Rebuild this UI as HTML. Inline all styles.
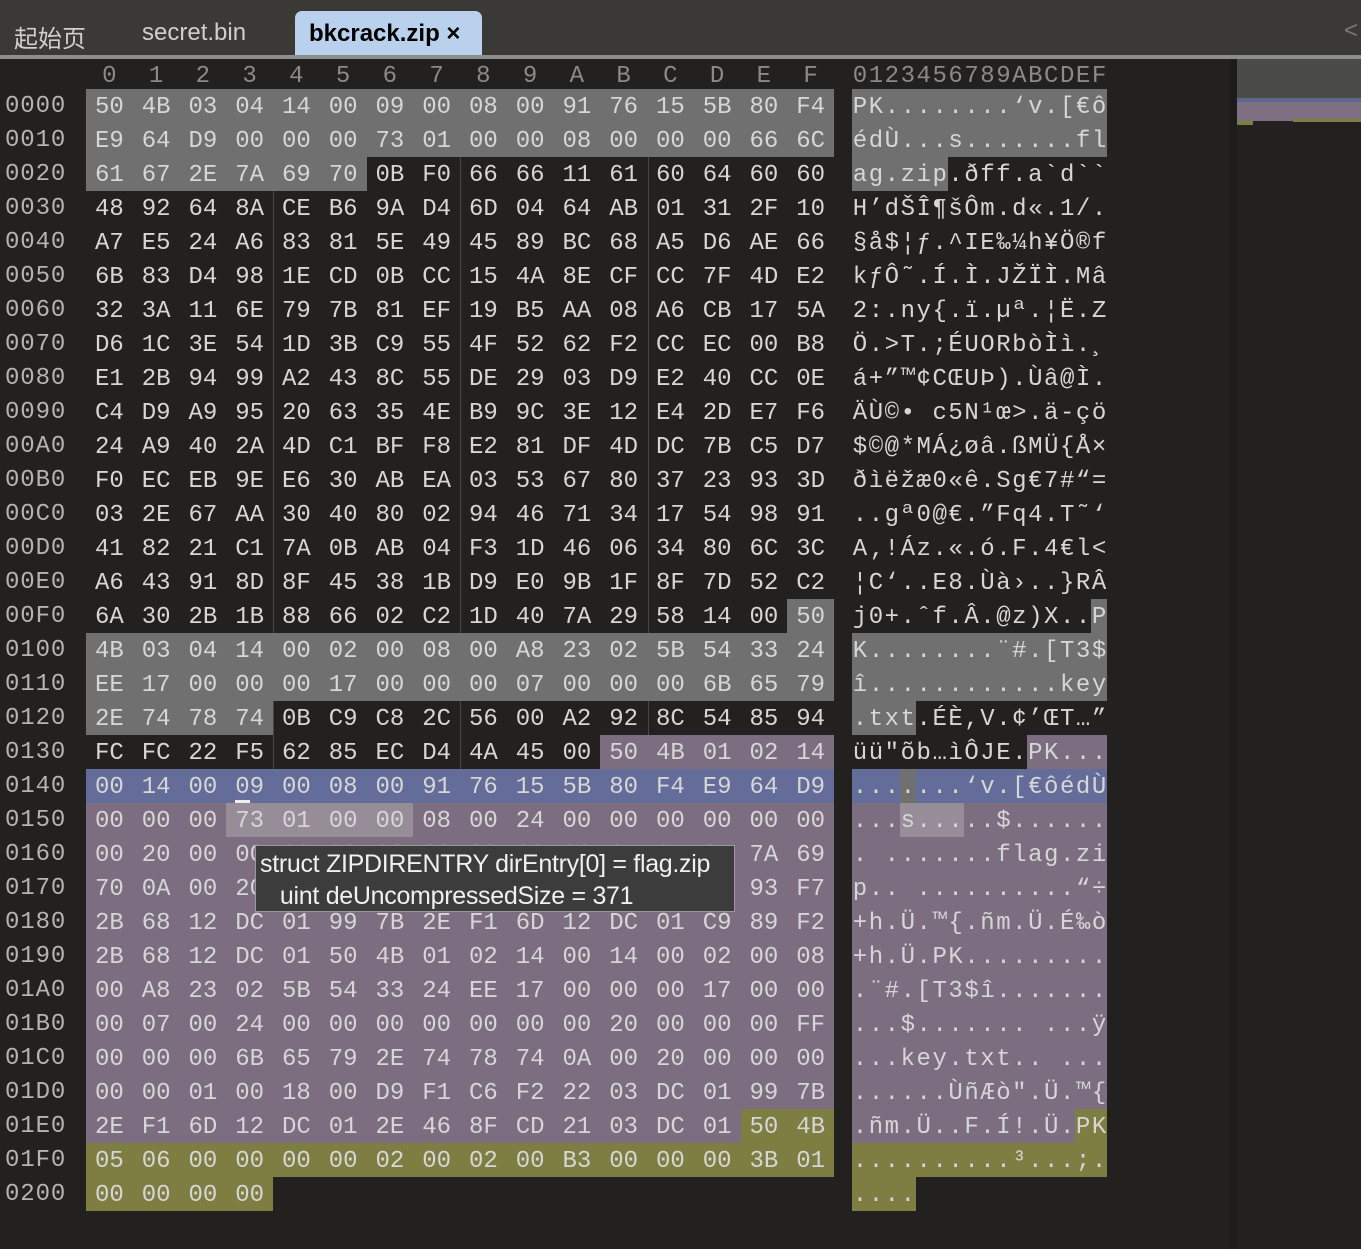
<!DOCTYPE html>
<html><head><meta charset="utf-8"><style>
*{margin:0;padding:0;box-sizing:border-box}
body{width:1361px;height:1249px;background:#222120;position:relative;overflow:hidden;font-family:"Liberation Mono","DejaVu Sans Mono",monospace;color:#d6d6d6}
.tabbar{position:absolute;left:0;top:0;width:1361px;height:55px;background:#3b3935}
.line{position:absolute;left:0;top:55px;width:1361px;height:4px;background:#8e8e8e}
.tab{position:absolute;top:19px;font:24px "Liberation Sans","Noto Sans CJK SC",sans-serif;color:#cfcfcf}
.act{position:absolute;left:295px;top:11px;width:187px;height:46px;background:#b9d1ec;border-radius:7px 7px 0 0;font:bold 24px "Liberation Sans",sans-serif;color:#000;padding:9px 0 0 14px}
.r{position:absolute;left:0;height:34px;width:1237px}
.o{position:absolute;left:5px;top:0;line-height:36px;font-size:24px;letter-spacing:0.9px;color:#b4b4b4}
.h{position:absolute;left:86px;top:0;white-space:pre}
.a{position:absolute;left:852px;top:0;white-space:pre}
.h i{display:inline-block;width:46.75px;height:34px;line-height:37px;text-align:center;font-style:normal;font-size:24px;vertical-align:top;overflow:hidden}
.a i{display:inline-block;width:15.94px;height:34px;line-height:37px;text-align:center;font-style:normal;font-size:24px;vertical-align:top;overflow:hidden}
.g{background:#707070}.p{background:#7c6e80}.b{background:#646d99}.l{background:#978d99}.y{background:#7e7d42}
.hd{color:#8a8a8a}
.sep{position:absolute;top:89px;width:1px;height:1088px;background:#474747}
</style></head><body>
<div class="tabbar"></div>
<div class="tab" style="left:14px">起始页</div>
<div class="tab" style="left:142px">secret.bin</div>
<div class="act">bkcrack.zip ×</div>
<div style="position:absolute;left:1344px;top:17px;color:#777;font:24px 'Liberation Sans',sans-serif">&lt;</div>
<div class="line"></div>
<div style="position:absolute;left:1230px;top:59px;width:7px;height:1190px;background:#1c1c1c"></div>
<div style="position:absolute;left:1237px;top:59px;width:124px;height:39px;background:#4b4c48"></div>
<div style="position:absolute;left:1237px;top:98px;width:124px;height:4px;background:#5e6690"></div>
<div style="position:absolute;left:1237px;top:102px;width:124px;height:19px;background:#7f6f82"></div>
<div style="position:absolute;left:1237px;top:121px;width:16px;height:4px;background:#7e7d42"></div>
<div style="position:absolute;left:1293px;top:119px;width:68px;height:3px;background:#7e7d42"></div>

<div class="r" style="top:58px"><div class="h hd"><i>0</i><i>1</i><i>2</i><i>3</i><i>4</i><i>5</i><i>6</i><i>7</i><i>8</i><i>9</i><i>A</i><i>B</i><i>C</i><i>D</i><i>E</i><i>F</i></div><div class="a hd"><i>0</i><i>1</i><i>2</i><i>3</i><i>4</i><i>5</i><i>6</i><i>7</i><i>8</i><i>9</i><i>A</i><i>B</i><i>C</i><i>D</i><i>E</i><i>F</i></div></div>

<div class="sep" style="left:273px"></div><div class="sep" style="left:460px"></div><div class="sep" style="left:648px"></div>

<div class="r" style="top:89px"><span class="o">0000</span><div class="h"><i class="g">50</i><i class="g">4B</i><i class="g">03</i><i class="g">04</i><i class="g">14</i><i class="g">00</i><i class="g">09</i><i class="g">00</i><i class="g">08</i><i class="g">00</i><i class="g">91</i><i class="g">76</i><i class="g">15</i><i class="g">5B</i><i class="g">80</i><i class="g">F4</i></div><div class="a"><i class="g">P</i><i class="g">K</i><i class="g">.</i><i class="g">.</i><i class="g">.</i><i class="g">.</i><i class="g">.</i><i class="g">.</i><i class="g">.</i><i class="g">.</i><i class="g">‘</i><i class="g">v</i><i class="g">.</i><i class="g">[</i><i class="g">€</i><i class="g">ô</i></div></div>
<div class="r" style="top:123px"><span class="o">0010</span><div class="h"><i class="g">E9</i><i class="g">64</i><i class="g">D9</i><i class="g">00</i><i class="g">00</i><i class="g">00</i><i class="g">73</i><i class="g">01</i><i class="g">00</i><i class="g">00</i><i class="g">08</i><i class="g">00</i><i class="g">00</i><i class="g">00</i><i class="g">66</i><i class="g">6C</i></div><div class="a"><i class="g">é</i><i class="g">d</i><i class="g">Ù</i><i class="g">.</i><i class="g">.</i><i class="g">.</i><i class="g">s</i><i class="g">.</i><i class="g">.</i><i class="g">.</i><i class="g">.</i><i class="g">.</i><i class="g">.</i><i class="g">.</i><i class="g">f</i><i class="g">l</i></div></div>
<div class="r" style="top:157px"><span class="o">0020</span><div class="h"><i class="g">61</i><i class="g">67</i><i class="g">2E</i><i class="g">7A</i><i class="g">69</i><i class="g">70</i><i>0B</i><i>F0</i><i>66</i><i>66</i><i>11</i><i>61</i><i>60</i><i>64</i><i>60</i><i>60</i></div><div class="a"><i class="g">a</i><i class="g">g</i><i class="g">.</i><i class="g">z</i><i class="g">i</i><i class="g">p</i><i>.</i><i>ð</i><i>f</i><i>f</i><i>.</i><i>a</i><i>`</i><i>d</i><i>`</i><i>`</i></div></div>
<div class="r" style="top:191px"><span class="o">0030</span><div class="h"><i>48</i><i>92</i><i>64</i><i>8A</i><i>CE</i><i>B6</i><i>9A</i><i>D4</i><i>6D</i><i>04</i><i>64</i><i>AB</i><i>01</i><i>31</i><i>2F</i><i>10</i></div><div class="a"><i>H</i><i>’</i><i>d</i><i>Š</i><i>Î</i><i>¶</i><i>š</i><i>Ô</i><i>m</i><i>.</i><i>d</i><i>«</i><i>.</i><i>1</i><i>/</i><i>.</i></div></div>
<div class="r" style="top:225px"><span class="o">0040</span><div class="h"><i>A7</i><i>E5</i><i>24</i><i>A6</i><i>83</i><i>81</i><i>5E</i><i>49</i><i>45</i><i>89</i><i>BC</i><i>68</i><i>A5</i><i>D6</i><i>AE</i><i>66</i></div><div class="a"><i>§</i><i>å</i><i>$</i><i>¦</i><i>ƒ</i><i>.</i><i>^</i><i>I</i><i>E</i><i>‰</i><i>¼</i><i>h</i><i>¥</i><i>Ö</i><i>®</i><i>f</i></div></div>
<div class="r" style="top:259px"><span class="o">0050</span><div class="h"><i>6B</i><i>83</i><i>D4</i><i>98</i><i>1E</i><i>CD</i><i>0B</i><i>CC</i><i>15</i><i>4A</i><i>8E</i><i>CF</i><i>CC</i><i>7F</i><i>4D</i><i>E2</i></div><div class="a"><i>k</i><i>ƒ</i><i>Ô</i><i>˜</i><i>.</i><i>Í</i><i>.</i><i>Ì</i><i>.</i><i>J</i><i>Ž</i><i>Ï</i><i>Ì</i><i>.</i><i>M</i><i>â</i></div></div>
<div class="r" style="top:293px"><span class="o">0060</span><div class="h"><i>32</i><i>3A</i><i>11</i><i>6E</i><i>79</i><i>7B</i><i>81</i><i>EF</i><i>19</i><i>B5</i><i>AA</i><i>08</i><i>A6</i><i>CB</i><i>17</i><i>5A</i></div><div class="a"><i>2</i><i>:</i><i>.</i><i>n</i><i>y</i><i>{</i><i>.</i><i>ï</i><i>.</i><i>µ</i><i>ª</i><i>.</i><i>¦</i><i>Ë</i><i>.</i><i>Z</i></div></div>
<div class="r" style="top:327px"><span class="o">0070</span><div class="h"><i>D6</i><i>1C</i><i>3E</i><i>54</i><i>1D</i><i>3B</i><i>C9</i><i>55</i><i>4F</i><i>52</i><i>62</i><i>F2</i><i>CC</i><i>EC</i><i>00</i><i>B8</i></div><div class="a"><i>Ö</i><i>.</i><i>&gt;</i><i>T</i><i>.</i><i>;</i><i>É</i><i>U</i><i>O</i><i>R</i><i>b</i><i>ò</i><i>Ì</i><i>ì</i><i>.</i><i>¸</i></div></div>
<div class="r" style="top:361px"><span class="o">0080</span><div class="h"><i>E1</i><i>2B</i><i>94</i><i>99</i><i>A2</i><i>43</i><i>8C</i><i>55</i><i>DE</i><i>29</i><i>03</i><i>D9</i><i>E2</i><i>40</i><i>CC</i><i>0E</i></div><div class="a"><i>á</i><i>+</i><i>”</i><i>™</i><i>¢</i><i>C</i><i>Œ</i><i>U</i><i>Þ</i><i>)</i><i>.</i><i>Ù</i><i>â</i><i>@</i><i>Ì</i><i>.</i></div></div>
<div class="r" style="top:395px"><span class="o">0090</span><div class="h"><i>C4</i><i>D9</i><i>A9</i><i>95</i><i>20</i><i>63</i><i>35</i><i>4E</i><i>B9</i><i>9C</i><i>3E</i><i>12</i><i>E4</i><i>2D</i><i>E7</i><i>F6</i></div><div class="a"><i>Ä</i><i>Ù</i><i>©</i><i>•</i><i> </i><i>c</i><i>5</i><i>N</i><i>¹</i><i>œ</i><i>&gt;</i><i>.</i><i>ä</i><i>-</i><i>ç</i><i>ö</i></div></div>
<div class="r" style="top:429px"><span class="o">00A0</span><div class="h"><i>24</i><i>A9</i><i>40</i><i>2A</i><i>4D</i><i>C1</i><i>BF</i><i>F8</i><i>E2</i><i>81</i><i>DF</i><i>4D</i><i>DC</i><i>7B</i><i>C5</i><i>D7</i></div><div class="a"><i>$</i><i>©</i><i>@</i><i>*</i><i>M</i><i>Á</i><i>¿</i><i>ø</i><i>â</i><i>.</i><i>ß</i><i>M</i><i>Ü</i><i>{</i><i>Å</i><i>×</i></div></div>
<div class="r" style="top:463px"><span class="o">00B0</span><div class="h"><i>F0</i><i>EC</i><i>EB</i><i>9E</i><i>E6</i><i>30</i><i>AB</i><i>EA</i><i>03</i><i>53</i><i>67</i><i>80</i><i>37</i><i>23</i><i>93</i><i>3D</i></div><div class="a"><i>ð</i><i>ì</i><i>ë</i><i>ž</i><i>æ</i><i>0</i><i>«</i><i>ê</i><i>.</i><i>S</i><i>g</i><i>€</i><i>7</i><i>#</i><i>“</i><i>=</i></div></div>
<div class="r" style="top:497px"><span class="o">00C0</span><div class="h"><i>03</i><i>2E</i><i>67</i><i>AA</i><i>30</i><i>40</i><i>80</i><i>02</i><i>94</i><i>46</i><i>71</i><i>34</i><i>17</i><i>54</i><i>98</i><i>91</i></div><div class="a"><i>.</i><i>.</i><i>g</i><i>ª</i><i>0</i><i>@</i><i>€</i><i>.</i><i>”</i><i>F</i><i>q</i><i>4</i><i>.</i><i>T</i><i>˜</i><i>‘</i></div></div>
<div class="r" style="top:531px"><span class="o">00D0</span><div class="h"><i>41</i><i>82</i><i>21</i><i>C1</i><i>7A</i><i>0B</i><i>AB</i><i>04</i><i>F3</i><i>1D</i><i>46</i><i>06</i><i>34</i><i>80</i><i>6C</i><i>3C</i></div><div class="a"><i>A</i><i>‚</i><i>!</i><i>Á</i><i>z</i><i>.</i><i>«</i><i>.</i><i>ó</i><i>.</i><i>F</i><i>.</i><i>4</i><i>€</i><i>l</i><i>&lt;</i></div></div>
<div class="r" style="top:565px"><span class="o">00E0</span><div class="h"><i>A6</i><i>43</i><i>91</i><i>8D</i><i>8F</i><i>45</i><i>38</i><i>1B</i><i>D9</i><i>E0</i><i>9B</i><i>1F</i><i>8F</i><i>7D</i><i>52</i><i>C2</i></div><div class="a"><i>¦</i><i>C</i><i>‘</i><i>.</i><i>.</i><i>E</i><i>8</i><i>.</i><i>Ù</i><i>à</i><i>›</i><i>.</i><i>.</i><i>}</i><i>R</i><i>Â</i></div></div>
<div class="r" style="top:599px"><span class="o">00F0</span><div class="h"><i>6A</i><i>30</i><i>2B</i><i>1B</i><i>88</i><i>66</i><i>02</i><i>C2</i><i>1D</i><i>40</i><i>7A</i><i>29</i><i>58</i><i>14</i><i>00</i><i class="g">50</i></div><div class="a"><i>j</i><i>0</i><i>+</i><i>.</i><i>ˆ</i><i>f</i><i>.</i><i>Â</i><i>.</i><i>@</i><i>z</i><i>)</i><i>X</i><i>.</i><i>.</i><i class="g">P</i></div></div>
<div class="r" style="top:633px"><span class="o">0100</span><div class="h"><i class="g">4B</i><i class="g">03</i><i class="g">04</i><i class="g">14</i><i class="g">00</i><i class="g">02</i><i class="g">00</i><i class="g">08</i><i class="g">00</i><i class="g">A8</i><i class="g">23</i><i class="g">02</i><i class="g">5B</i><i class="g">54</i><i class="g">33</i><i class="g">24</i></div><div class="a"><i class="g">K</i><i class="g">.</i><i class="g">.</i><i class="g">.</i><i class="g">.</i><i class="g">.</i><i class="g">.</i><i class="g">.</i><i class="g">.</i><i class="g">¨</i><i class="g">#</i><i class="g">.</i><i class="g">[</i><i class="g">T</i><i class="g">3</i><i class="g">$</i></div></div>
<div class="r" style="top:667px"><span class="o">0110</span><div class="h"><i class="g">EE</i><i class="g">17</i><i class="g">00</i><i class="g">00</i><i class="g">00</i><i class="g">17</i><i class="g">00</i><i class="g">00</i><i class="g">00</i><i class="g">07</i><i class="g">00</i><i class="g">00</i><i class="g">00</i><i class="g">6B</i><i class="g">65</i><i class="g">79</i></div><div class="a"><i class="g">î</i><i class="g">.</i><i class="g">.</i><i class="g">.</i><i class="g">.</i><i class="g">.</i><i class="g">.</i><i class="g">.</i><i class="g">.</i><i class="g">.</i><i class="g">.</i><i class="g">.</i><i class="g">.</i><i class="g">k</i><i class="g">e</i><i class="g">y</i></div></div>
<div class="r" style="top:701px"><span class="o">0120</span><div class="h"><i class="g">2E</i><i class="g">74</i><i class="g">78</i><i class="g">74</i><i>0B</i><i>C9</i><i>C8</i><i>2C</i><i>56</i><i>00</i><i>A2</i><i>92</i><i>8C</i><i>54</i><i>85</i><i>94</i></div><div class="a"><i class="g">.</i><i class="g">t</i><i class="g">x</i><i class="g">t</i><i>.</i><i>É</i><i>È</i><i>,</i><i>V</i><i>.</i><i>¢</i><i>’</i><i>Œ</i><i>T</i><i>…</i><i>”</i></div></div>
<div class="r" style="top:735px"><span class="o">0130</span><div class="h"><i>FC</i><i>FC</i><i>22</i><i>F5</i><i>62</i><i>85</i><i>EC</i><i>D4</i><i>4A</i><i>45</i><i>00</i><i class="p">50</i><i class="p">4B</i><i class="p">01</i><i class="p">02</i><i class="p">14</i></div><div class="a"><i>ü</i><i>ü</i><i>"</i><i>õ</i><i>b</i><i>…</i><i>ì</i><i>Ô</i><i>J</i><i>E</i><i>.</i><i class="p">P</i><i class="p">K</i><i class="p">.</i><i class="p">.</i><i class="p">.</i></div></div>
<div class="r" style="top:769px"><span class="o">0140</span><div class="h"><i class="b">00</i><i class="b">14</i><i class="b">00</i><i class="b">09</i><i class="b">00</i><i class="b">08</i><i class="b">00</i><i class="b">91</i><i class="b">76</i><i class="b">15</i><i class="b">5B</i><i class="b">80</i><i class="b">F4</i><i class="b">E9</i><i class="b">64</i><i class="b">D9</i></div><div class="a"><i class="b">.</i><i class="b">.</i><i class="b">.</i><i class="g">.</i><i class="b">.</i><i class="b">.</i><i class="b">.</i><i class="b">‘</i><i class="b">v</i><i class="b">.</i><i class="b">[</i><i class="b">€</i><i class="b">ô</i><i class="b">é</i><i class="b">d</i><i class="b">Ù</i></div></div>
<div class="r" style="top:803px"><span class="o">0150</span><div class="h"><i class="p">00</i><i class="p">00</i><i class="p">00</i><i class="l">73</i><i class="l">01</i><i class="l">00</i><i class="l">00</i><i class="p">08</i><i class="p">00</i><i class="p">24</i><i class="p">00</i><i class="p">00</i><i class="p">00</i><i class="p">00</i><i class="p">00</i><i class="p">00</i></div><div class="a"><i class="p">.</i><i class="p">.</i><i class="p">.</i><i class="l">s</i><i class="l">.</i><i class="l">.</i><i class="l">.</i><i class="p">.</i><i class="p">.</i><i class="p">$</i><i class="p">.</i><i class="p">.</i><i class="p">.</i><i class="p">.</i><i class="p">.</i><i class="p">.</i></div></div>
<div class="r" style="top:837px"><span class="o">0160</span><div class="h"><i class="p">00</i><i class="p">20</i><i class="p">00</i><i class="p">00</i><i class="p">00</i><i class="p">00</i><i class="p">00</i><i class="p">00</i><i class="p">00</i><i class="p">66</i><i class="p">6C</i><i class="p">61</i><i class="p">67</i><i class="p">2E</i><i class="p">7A</i><i class="p">69</i></div><div class="a"><i class="p">.</i><i class="p"> </i><i class="p">.</i><i class="p">.</i><i class="p">.</i><i class="p">.</i><i class="p">.</i><i class="p">.</i><i class="p">.</i><i class="p">f</i><i class="p">l</i><i class="p">a</i><i class="p">g</i><i class="p">.</i><i class="p">z</i><i class="p">i</i></div></div>
<div class="r" style="top:871px"><span class="o">0170</span><div class="h"><i class="p">70</i><i class="p">0A</i><i class="p">00</i><i class="p">20</i><i class="p">00</i><i class="p">00</i><i class="p">00</i><i class="p">00</i><i class="p">00</i><i class="p">01</i><i class="p">00</i><i class="p">18</i><i class="p">00</i><i class="p">00</i><i class="p">93</i><i class="p">F7</i></div><div class="a"><i class="p">p</i><i class="p">.</i><i class="p">.</i><i class="p"> </i><i class="p">.</i><i class="p">.</i><i class="p">.</i><i class="p">.</i><i class="p">.</i><i class="p">.</i><i class="p">.</i><i class="p">.</i><i class="p">.</i><i class="p">.</i><i class="p">“</i><i class="p">÷</i></div></div>
<div class="r" style="top:905px"><span class="o">0180</span><div class="h"><i class="p">2B</i><i class="p">68</i><i class="p">12</i><i class="p">DC</i><i class="p">01</i><i class="p">99</i><i class="p">7B</i><i class="p">2E</i><i class="p">F1</i><i class="p">6D</i><i class="p">12</i><i class="p">DC</i><i class="p">01</i><i class="p">C9</i><i class="p">89</i><i class="p">F2</i></div><div class="a"><i class="p">+</i><i class="p">h</i><i class="p">.</i><i class="p">Ü</i><i class="p">.</i><i class="p">™</i><i class="p">{</i><i class="p">.</i><i class="p">ñ</i><i class="p">m</i><i class="p">.</i><i class="p">Ü</i><i class="p">.</i><i class="p">É</i><i class="p">‰</i><i class="p">ò</i></div></div>
<div class="r" style="top:939px"><span class="o">0190</span><div class="h"><i class="p">2B</i><i class="p">68</i><i class="p">12</i><i class="p">DC</i><i class="p">01</i><i class="p">50</i><i class="p">4B</i><i class="p">01</i><i class="p">02</i><i class="p">14</i><i class="p">00</i><i class="p">14</i><i class="p">00</i><i class="p">02</i><i class="p">00</i><i class="p">08</i></div><div class="a"><i class="p">+</i><i class="p">h</i><i class="p">.</i><i class="p">Ü</i><i class="p">.</i><i class="p">P</i><i class="p">K</i><i class="p">.</i><i class="p">.</i><i class="p">.</i><i class="p">.</i><i class="p">.</i><i class="p">.</i><i class="p">.</i><i class="p">.</i><i class="p">.</i></div></div>
<div class="r" style="top:973px"><span class="o">01A0</span><div class="h"><i class="p">00</i><i class="p">A8</i><i class="p">23</i><i class="p">02</i><i class="p">5B</i><i class="p">54</i><i class="p">33</i><i class="p">24</i><i class="p">EE</i><i class="p">17</i><i class="p">00</i><i class="p">00</i><i class="p">00</i><i class="p">17</i><i class="p">00</i><i class="p">00</i></div><div class="a"><i class="p">.</i><i class="p">¨</i><i class="p">#</i><i class="p">.</i><i class="p">[</i><i class="p">T</i><i class="p">3</i><i class="p">$</i><i class="p">î</i><i class="p">.</i><i class="p">.</i><i class="p">.</i><i class="p">.</i><i class="p">.</i><i class="p">.</i><i class="p">.</i></div></div>
<div class="r" style="top:1007px"><span class="o">01B0</span><div class="h"><i class="p">00</i><i class="p">07</i><i class="p">00</i><i class="p">24</i><i class="p">00</i><i class="p">00</i><i class="p">00</i><i class="p">00</i><i class="p">00</i><i class="p">00</i><i class="p">00</i><i class="p">20</i><i class="p">00</i><i class="p">00</i><i class="p">00</i><i class="p">FF</i></div><div class="a"><i class="p">.</i><i class="p">.</i><i class="p">.</i><i class="p">$</i><i class="p">.</i><i class="p">.</i><i class="p">.</i><i class="p">.</i><i class="p">.</i><i class="p">.</i><i class="p">.</i><i class="p"> </i><i class="p">.</i><i class="p">.</i><i class="p">.</i><i class="p">ÿ</i></div></div>
<div class="r" style="top:1041px"><span class="o">01C0</span><div class="h"><i class="p">00</i><i class="p">00</i><i class="p">00</i><i class="p">6B</i><i class="p">65</i><i class="p">79</i><i class="p">2E</i><i class="p">74</i><i class="p">78</i><i class="p">74</i><i class="p">0A</i><i class="p">00</i><i class="p">20</i><i class="p">00</i><i class="p">00</i><i class="p">00</i></div><div class="a"><i class="p">.</i><i class="p">.</i><i class="p">.</i><i class="p">k</i><i class="p">e</i><i class="p">y</i><i class="p">.</i><i class="p">t</i><i class="p">x</i><i class="p">t</i><i class="p">.</i><i class="p">.</i><i class="p"> </i><i class="p">.</i><i class="p">.</i><i class="p">.</i></div></div>
<div class="r" style="top:1075px"><span class="o">01D0</span><div class="h"><i class="p">00</i><i class="p">00</i><i class="p">01</i><i class="p">00</i><i class="p">18</i><i class="p">00</i><i class="p">D9</i><i class="p">F1</i><i class="p">C6</i><i class="p">F2</i><i class="p">22</i><i class="p">03</i><i class="p">DC</i><i class="p">01</i><i class="p">99</i><i class="p">7B</i></div><div class="a"><i class="p">.</i><i class="p">.</i><i class="p">.</i><i class="p">.</i><i class="p">.</i><i class="p">.</i><i class="p">Ù</i><i class="p">ñ</i><i class="p">Æ</i><i class="p">ò</i><i class="p">"</i><i class="p">.</i><i class="p">Ü</i><i class="p">.</i><i class="p">™</i><i class="p">{</i></div></div>
<div class="r" style="top:1109px"><span class="o">01E0</span><div class="h"><i class="p">2E</i><i class="p">F1</i><i class="p">6D</i><i class="p">12</i><i class="p">DC</i><i class="p">01</i><i class="p">2E</i><i class="p">46</i><i class="p">8F</i><i class="p">CD</i><i class="p">21</i><i class="p">03</i><i class="p">DC</i><i class="p">01</i><i class="y">50</i><i class="y">4B</i></div><div class="a"><i class="p">.</i><i class="p">ñ</i><i class="p">m</i><i class="p">.</i><i class="p">Ü</i><i class="p">.</i><i class="p">.</i><i class="p">F</i><i class="p">.</i><i class="p">Í</i><i class="p">!</i><i class="p">.</i><i class="p">Ü</i><i class="p">.</i><i class="y">P</i><i class="y">K</i></div></div>
<div class="r" style="top:1143px"><span class="o">01F0</span><div class="h"><i class="y">05</i><i class="y">06</i><i class="y">00</i><i class="y">00</i><i class="y">00</i><i class="y">00</i><i class="y">02</i><i class="y">00</i><i class="y">02</i><i class="y">00</i><i class="y">B3</i><i class="y">00</i><i class="y">00</i><i class="y">00</i><i class="y">3B</i><i class="y">01</i></div><div class="a"><i class="y">.</i><i class="y">.</i><i class="y">.</i><i class="y">.</i><i class="y">.</i><i class="y">.</i><i class="y">.</i><i class="y">.</i><i class="y">.</i><i class="y">.</i><i class="y">³</i><i class="y">.</i><i class="y">.</i><i class="y">.</i><i class="y">;</i><i class="y">.</i></div></div>
<div class="r" style="top:1177px"><span class="o">0200</span><div class="h"><i class="y">00</i><i class="y">00</i><i class="y">00</i><i class="y">00</i></div><div class="a"><i class="y">.</i><i class="y">.</i><i class="y">.</i><i class="y">.</i></div></div>

<div style="position:absolute;left:235px;top:800px;width:15px;height:3px;background:#eee"></div>
<div style="position:absolute;left:255px;top:845px;width:480px;height:67px;background:#3c3c3c;border:1px solid #9a9a9a;font:25px 'Liberation Sans',sans-serif;color:#f0f0f0;padding:2px 0 0 4px;line-height:32px;white-space:pre;letter-spacing:-0.3px">struct ZIPDIRENTRY dirEntry[0] = flag.zip
   uint deUncompressedSize = 371</div>
</body></html>
